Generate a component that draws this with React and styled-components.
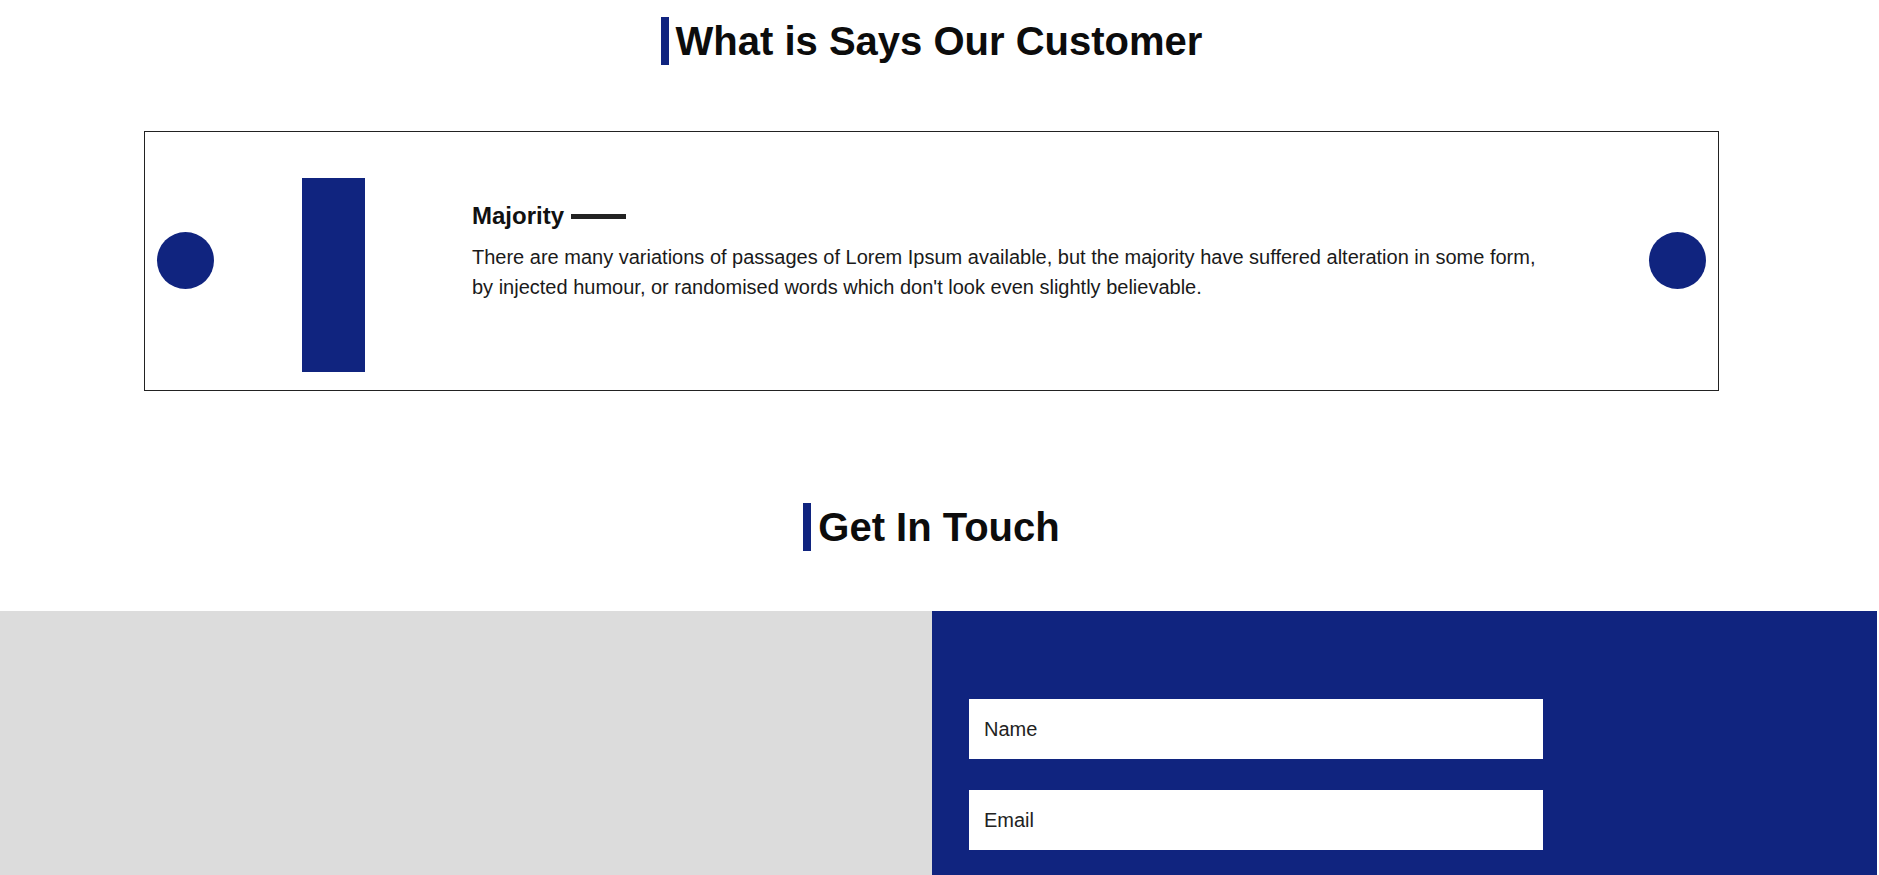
import React from 'react';
import styled, { createGlobalStyle } from 'styled-components';

const navy = '#10247f';

const GlobalStyle = createGlobalStyle`
  * { box-sizing: border-box; }
  body {
    margin: 0;
    font-family: "Liberation Sans", Arial, sans-serif;
    color: #111;
    background: #fff;
    overflow: hidden;
  }
`;

const Page = styled.div`
  width: 1863px;
`;

const Section = styled.section`
  display: flex;
  flex-direction: column;
  align-items: center;
  padding-top: ${p => p.top}px;
`;

const Title = styled.h2`
  margin: 0;
  font-size: 40px;
  line-height: 48px;
  font-weight: 700;
  color: #0c0c0c;
  border-left: 8px solid ${navy};
  padding-left: 7px;
`;

const Card = styled.div`
  margin-top: ${p => p.gap}px;
  width: 1575px;
  border: 1px solid #222;
  padding: 17px 12px 18px;
  display: flex;
  align-items: center;
`;

const Arrow = styled.button`
  flex: 0 0 57px;
  width: 57px;
  height: 57px;
  border: none;
  border-radius: 50%;
  background: ${navy};
  padding: 0;
  cursor: pointer;
`;

const Slide = styled.div`
  flex: 1;
  display: flex;
  align-items: flex-start;
  padding-left: 88px;
`;

const Photo = styled.div`
  flex: 0 0 63px;
  height: 194px;
  margin-top: 29px;
  background: ${navy};
`;

const Quote = styled.div`
  width: 1075px;
  margin-left: 107px;
  margin-top: 53px;
`;

const Name = styled.h3`
  margin: 0 0 11px;
  display: flex;
  align-items: center;
  font-size: 24px;
  line-height: 28.8px;
  font-weight: 700;
  color: #111;

  &::after {
    content: '';
    width: 55px;
    height: 5px;
    margin-left: 7px;
    background: #222;
  }
`;

const Text = styled.p`
  margin: 0;
  font-size: 20px;
  line-height: 30px;
  color: #1a1a1a;
`;

const Contact = styled.section`
  margin-top: 60px;
  width: 1877px;
  display: grid;
  grid-template-columns: 932px 1fr;
  min-height: 300px;
`;

const MapSide = styled.div`
  background: #dcdcdc;
`;

const FormSide = styled.form`
  background: ${navy};
  padding: 88px 0 0 37px;
  display: flex;
  flex-direction: column;
  gap: 31px;
`;

const Field = styled.input`
  width: 574px;
  height: 60px;
  border: none;
  outline: none;
  padding: 0 15px;
  font-family: "Liberation Sans", Arial, sans-serif;
  font-size: 20px;
  color: #222;
  background: #fff;

  &::placeholder {
    color: #222;
  }
`;

export default function App() {
  return (
    <>
      <GlobalStyle />
      <Page>
        <Section top={17}>
          <Title>What is Says Our Customer</Title>
          <Card gap={66}>
            <Arrow aria-label="previous" />
            <Slide>
              <Photo />
              <Quote>
                <Name>Majority</Name>
                <Text>
                  There are many variations of passages of Lorem Ipsum available, but the majority have
                  suffered alteration in some form, by injected humour, or randomised words which don't
                  look even slightly believable.
                </Text>
              </Quote>
            </Slide>
            <Arrow aria-label="next" />
          </Card>
        </Section>
        <Section top={112}>
          <Title>Get In Touch</Title>
        </Section>
      </Page>
      <Contact>
        <MapSide />
        <FormSide>
          <Field placeholder="Name" />
          <Field placeholder="Email" />
        </FormSide>
      </Contact>
    </>
  );
}
